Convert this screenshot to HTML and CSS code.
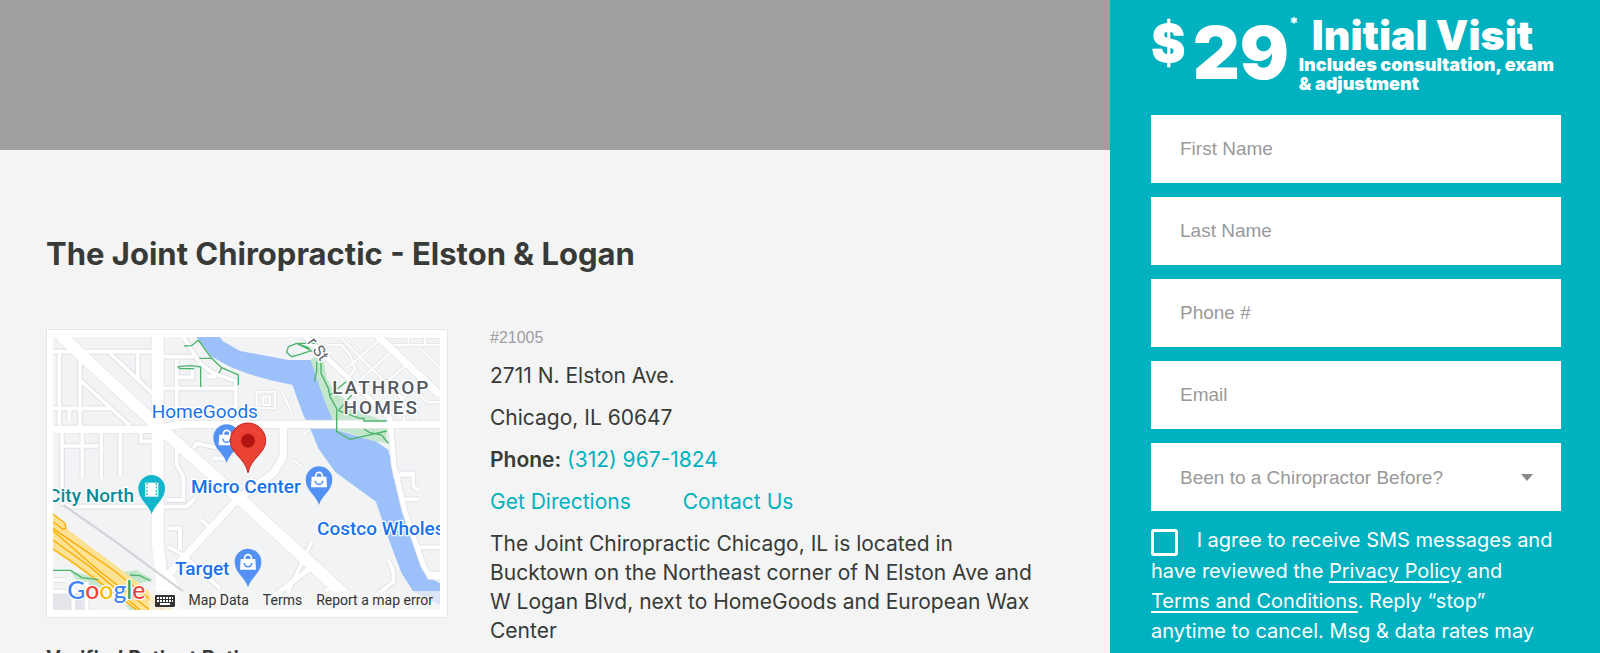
FILE: index.html
```html
<!DOCTYPE html>
<html lang="en">
<head>
  <meta charset="UTF-8">
  <meta name="viewport" content="width=device-width, initial-scale=1.0">
  <title>The Joint Chiropractic - Elston &amp; Logan</title>
  <link rel="stylesheet" href="styles.css">
</head>
<body>

<div class="page">
  <main class="main">
    <div class="hero"></div>

    <section class="clinic">
      <h1>The Joint Chiropractic - Elston &amp; Logan</h1>

      <div class="clinic-row">
        <div class="clinic-left">
          <div class="map-card">
            <div class="map">
              <svg class="map-canvas" viewBox="39 36 1161 819" preserveAspectRatio="xMidYMid slice" role="img" aria-label="Map">
                <defs>
                  <g id="minor">
                    <path d="M39 80H340M58 80V300M120 80V313M205 80L340 208M293 80V155L300 168M120 165L268 300M39 250H215M88 250V288"/>
                    <path d="M66 320V535L90 545H440L465 520M127 320V460M184 320V460M241 320V450M66 363H175M303 320V349H340"/>
                    <path d="M370 95H465M410 105V185M370 190H585M410 190V313M413 157H457V130M430 36L480 115L520 145L587 168V300"/>
                    <path d="M500 155H530M410 370V420L430 455V525H380M520 400H560M460 370L470 355L530 368"/>
                    <path d="M39 765H75M100 790V855M140 770V855M39 800H140M385 610H420V675M385 665L430 690L540 790M483 583L510 608"/>
                    <path d="M815 650L740 810M1045 705L1060 740V770L1010 810M1060 450H1125M1080 445H1120V485L1135 495M1090 523H1135M1135 667H1200M1160 745H1200"/>
                  </g>
                  <g id="thin">
                    <path d="M900 36L1100 235L1090 290M1050 36H1200M1105 36V60M1155 36V60M1060 60H1200M1140 70L1200 130M920 130L1025 40M960 165L1055 80M1010 195L1100 120M1050 255L1130 180"/>
                    <path d="M1125 190L1160 232H1200M1130 235V280M860 60H905L930 90L945 130L925 160M650 200H705V250H650ZM670 215H690V240H670ZM725 195L755 265M600 36V40M760 405L785 425M790 330L805 315"/>
                  </g>
                  <g id="bag-pin">
                    <path class="pin-blue" d="M0 0C-7 -28 -40 -43 -40 -76A40 40 0 0 1 40 -76C40 -43 7 -28 0 0Z"/>
                    <path class="pin-icon" d="M-22 -85H22L24 -53H-24Z"/>
                    <path class="bag-handle" d="M-10 -83V-88A10 10 0 0 1 10 -88V-83"/>
                    <path class="bag-smile" d="M-11 -73A11 11 0 0 0 11 -73"/>
                  </g>
                </defs>

                <rect class="land" x="39" y="36" width="1161" height="819"/>
                <path class="block" d="M39 800H130V855H39Z"/>

                <!-- river and park -->
                <path class="river" d="M470 36H540L548 48L600 78L745 105H815L835 150L880 290L890 315L1010 350L1045 375L1063 450L1105 580L1145 705L1165 755L1200 775V840L1120 800L1085 745L1045 640L1008 530L885 440L835 370L815 320L790 270L757 180L690 165L620 145L570 125L515 95Z"/>
                <path class="park" d="M812 105L825 95L852 112L860 160L880 195L960 262L1040 290V355L990 345L890 312L855 230L830 160Z"/>
                <path class="park" d="M90 738L160 755L290 735L340 765L300 775L240 745L180 790L110 765Z"/>
                <path class="park" d="M255 840L300 845L290 855H270Z"/>

                <!-- roads -->
                <use href="#minor" class="casing"/>
                <use href="#thin" class="casing-thin"/>
                <path class="major-casing" d="M60 30L350 300L600 522L920 815M353 30V660L370 760"/>
                <path class="road-casing" d="M39 313H340L420 298H1200M375 760L590 525L700 445L730 395V300M1010 30L1200 210"/>
                <path class="small-casing" d="M790 30L1050 280L1062 420L1095 560L1150 720L1170 755L1200 757M700 815L810 730M850 815L865 790"/>
                <use href="#minor" class="street"/>
                <use href="#thin" class="street-thin"/>
                <path class="major" d="M60 30L350 300L600 522L920 815"/>
                <path class="major" d="M353 30V660L370 790"/>
                <path class="road" d="M39 313H340L420 298H1200M375 760L590 525L700 445L730 395V300"/>
                <path class="road" d="M1010 30L1200 210"/>
                <path class="road-small" d="M790 30L1050 280L1062 420L1095 560L1150 720L1170 755L1200 757M700 815L810 730M850 815L865 790"/>
                <path class="road-fill" d="M365 745H395L420 790L430 855H400L345 790Z"/>

                <!-- railway and expressway -->
                <path class="rail" d="M70 540L230 652L430 800"/>
                <path class="highway" d="M39 567L75 595L78 610L245 735L400 855H290L39 675Z"/>
                <path class="highway-line" d="M39 567L75 595L78 610L68 612L39 590M39 610L220 735L370 855M39 617L180 740L330 855M39 645L150 725L300 855M39 672L110 720L290 855"/>

                <!-- trails -->
                <path class="trail" d="M475 45L455 62L433 63M475 45L515 100L545 128L595 150V180M515 100L478 100M545 128L537 145M413 125L455 122L482 126V186M413 125L420 131H462"/>
                <path class="trail" d="M830 110V140L823 168M843 112V145L865 190L870 215L890 250V320L930 343L1040 318M868 212L918 170M895 257L935 210M895 257L960 280H972V288H1040M988 322L1025 330L1045 355M988 322L972 312"/>
                <path class="trail" d="M770 55L745 65L740 82L755 95L780 88L812 78L805 68L770 55L840 90M775 55H830"/>
                <path class="trail" d="M39 736H92L125 758L175 764M270 750L300 752L332 768"/>

                <!-- labels -->
                <text class="street-label" transform="translate(800 52) rotate(55)">r St</text>
                <text class="area" x="1024" y="208">LATHROP</text>
                <text class="area" x="1024" y="266">HOMES</text>
                <text class="poi thin-label" x="335" y="278">HomeGoods</text>
                <text class="poi" x="453" y="504">Micro Center</text>
                <text class="poi" x="831" y="630">Costco Wholesale</text>
                <text class="poi" x="405" y="750">Target</text>
                <text class="poi teal" x="282" y="530">City North</text>

                <use href="#bag-pin" x="560" y="414"/>
                <use href="#bag-pin" x="837" y="540"/>
                <use href="#bag-pin" x="624" y="787"/>
                <path class="pin-teal" d="M335 568C328 540 295 525 295 490A40 40 0 0 1 375 490C375 525 342 540 335 568Z"/>
                <path class="pin-icon" d="M315 473H355V515H315Z"/>
                <path class="film" d="M321 475V514M349 475V514"/>
                <path class="pin-red" d="M624 443C616 400 571 385 571 347A53 53 0 0 1 677 347C677 385 632 400 624 443Z"/>
                <circle class="pin-dot" cx="624" cy="347" r="21"/>
                <text class="google" x="82" y="821"><tspan class="g-blue">G</tspan><tspan class="g-red">o</tspan><tspan class="g-yellow">o</tspan><tspan class="g-blue">g</tspan><tspan class="g-green">l</tspan><tspan class="g-red">e</tspan></text>
              </svg>
              <div class="map-bar">
                <button type="button" class="map-keys" aria-label="Keyboard shortcuts">
                  <svg width="20" height="12" viewBox="0 0 20 12">
                    <rect width="20" height="12" rx="1" fill="#333"/>
                    <path d="M2 3H18M2 6H18" stroke="#fff" stroke-width="2" stroke-dasharray="2 1"/>
                    <path d="M5 9H15" stroke="#fff" stroke-width="2"/>
                  </svg>
                </button>
                <button type="button">Map Data</button>
                <a href="#">Terms</a>
                <a href="#">Report a map error</a>
              </div>
            </div>
          </div>
          <h2>Verified Patient Rating</h2>
        </div>

        <div class="clinic-info">
          <p class="clinic-id">#21005</p>
          <p>2711 N. Elston Ave.</p>
          <p>Chicago, IL 60647</p>
          <p><strong>Phone:</strong> <a href="tel:3129671824">(312) 967-1824</a></p>
          <p class="clinic-links"><a href="#">Get Directions</a><a href="#">Contact Us</a></p>
          <p>The Joint Chiropractic Chicago, IL is located in Bucktown on the Northeast corner of N Elston Ave and W Logan Blvd, next to HomeGoods and European Wax Center</p>
        </div>
      </div>
    </section>
  </main>

  <aside class="sidebar">
    <div class="offer">
      <span class="offer-dollar">$</span>
      <span class="offer-price">29</span>
      <span class="offer-star">*</span>
      <div class="offer-text">
        <div class="offer-title">Initial Visit</div>
        <div class="offer-sub">Includes consultation, exam &amp; adjustment</div>
      </div>
    </div>

    <form class="lead-form">
      <input class="field" type="text" aria-label="First Name" placeholder="First Name">
      <input class="field" type="text" aria-label="Last Name" placeholder="Last Name">
      <input class="field" type="tel" aria-label="Phone #" placeholder="Phone #">
      <input class="field" type="email" aria-label="Email" placeholder="Email">
      <div class="select-wrap">
        <select class="field" aria-label="Been to a Chiropractor Before?">
          <option>Been to a Chiropractor Before?</option>
          <option>Yes</option>
          <option>No</option>
        </select>
      </div>
      <div class="agree">
        <input type="checkbox" id="agree">
        <label for="agree">I agree to receive SMS messages and have reviewed the <a href="#">Privacy Policy</a> and <a href="#">Terms and Conditions</a>. Reply “stop” anytime to cancel. Msg &amp; data rates may apply.</label>
      </div>
    </form>
  </aside>
</div>

</body>
</html>
```
FILE: styles.css
```css
* {
  box-sizing: border-box;
}

body {
  margin: 0;
  height: 100vh;
  overflow: hidden;
  background: #f4f4f4;
  color: #373a36;
  font-family: Inter, "Liberation Sans", sans-serif;
  font-size: 20px;
  line-height: 29px;
}

a {
  color: #00b2bf;
  text-decoration: none;
}

.page {
  display: flex;
  min-height: 100vh;
}

.main {
  flex: 1;
  min-width: 0;
}

.hero {
  height: 150px;
  background: #9f9f9f;
}

.clinic {
  padding: 84px 46px 0;
}

h1 {
  margin: 0 0 55px;
  font-size: 31px;
  line-height: 40px;
  font-weight: 700;
}

.clinic-row {
  display: grid;
  grid-template-columns: 402px 1fr;
  gap: 42px;
}

.map-card {
  padding: 7px 7px 7px 6px;
  background: #fff;
  border: 1px solid #e6e6e6;
}

.map {
  position: relative;
  overflow: hidden;
}

.map-canvas {
  display: block;
  width: 100%;
}

.land { fill: #f1f3f4; }
.block { fill: #e3e5ea; }
.river { fill: #9cc0f9; }
.park { fill: #c3e6cd; }
.rail { fill: none; stroke: #d3d5d8; stroke-width: 7; }
.highway { fill: #fde293; }
.highway-line { fill: none; stroke: #f9ab00; stroke-width: 4; }
.trail { fill: none; stroke: #4bb36a; stroke-width: 4; }

.casing { fill: none; stroke: #dfe1e5; stroke-width: 17; }
.casing-thin { fill: none; stroke: #e4e6e9; stroke-width: 11; }
.major-casing { fill: none; stroke: #e6e8eb; stroke-width: 40; }
.road-casing { fill: none; stroke: #e3e5e8; stroke-width: 27; }
.small-casing { fill: none; stroke: #dfe1e5; stroke-width: 20; }
.street { fill: none; stroke: #fff; stroke-width: 11; }
.street-thin { fill: none; stroke: #fff; stroke-width: 6; }
.major { fill: none; stroke: #fff; stroke-width: 35; }
.road { fill: none; stroke: #fff; stroke-width: 22; }
.road-small { fill: none; stroke: #fff; stroke-width: 15; }
.road-fill { fill: #fff; }

.map-canvas text {
  font-family: Roboto, sans-serif;
  font-size: 57px;
  paint-order: stroke;
  stroke: #fff;
  stroke-width: 8px;
  stroke-linejoin: round;
}

.map-canvas .poi {
  fill: #1a73e8;
  font-weight: 500;
}

.map-canvas .thin-label {
  font-weight: 400;
}

.map-canvas .teal {
  fill: #0b8a94;
  text-anchor: end;
}

.map-canvas .area {
  fill: #555a60;
  font-weight: 500;
  letter-spacing: 6px;
  text-anchor: middle;
}

.map-canvas .street-label {
  fill: #5f6368;
  font-size: 48px;
}

.map-canvas .google {
  font-family: Lato, sans-serif;
  font-size: 74px;
  font-weight: 500;
}

.g-blue { fill: #4285f4; }
.g-red { fill: #ea4335; }
.g-yellow { fill: #fbbc04; }
.g-green { fill: #34a853; }

.pin-blue { fill: #5491f5; }
.pin-teal { fill: #12b5cb; }
.pin-red { fill: #ea4335; stroke: #c5221f; stroke-width: 3; }
.pin-dot { fill: #b31412; }
.pin-icon { fill: #fff; }
.bag-handle { fill: none; stroke: #fff; stroke-width: 5; }
.bag-smile { fill: none; stroke: #5491f5; stroke-width: 5; }
.film { fill: none; stroke: #12b5cb; stroke-width: 4; stroke-dasharray: 5 5; }

.map-bar {
  position: absolute;
  right: 0;
  bottom: 0;
  display: flex;
  align-items: center;
  gap: 14px;
  height: 19px;
  padding: 0 7px 0 6px;
  background: rgba(245, 245, 245, 0.7);
}

.map-bar button,
.map-bar a {
  padding: 0;
  border: 0;
  background: none;
  color: #333;
  font-family: Roboto, sans-serif;
  font-size: 14px;
  line-height: 19px;
}

.map-keys svg {
  display: block;
}

h2 {
  margin: 27px 0 0;
  font-size: 20px;
  line-height: 26px;
  font-weight: 700;
}

.clinic-info {
  padding-right: 16px;
  font-size: 21px;
}

.clinic-info p {
  margin: 0 0 13px;
}

.clinic-info .clinic-id {
  margin: 0 0 14px;
  color: #9e9e9e;
  font-family: "Liberation Sans", Arial, sans-serif;
  font-size: 16px;
  line-height: 18px;
}

.clinic-info strong {
  font-weight: 600;
}

.clinic-links {
  display: flex;
  gap: 52px;
}

.sidebar {
  width: 490px;
  padding: 15px 39px 0 41px;
  background: #00b2bf;
  color: #fff;
}

.offer {
  display: flex;
  height: 100px;
  font-weight: 900;
}

.offer-dollar {
  font-size: 52px;
  line-height: 58px;
}

.offer-price {
  margin-left: 7px;
  font-size: 73px;
  line-height: 75px;
}

.offer-star {
  font-size: 16px;
  line-height: 16px;
}

.offer-text {
  flex: 1;
}

.offer-title {
  padding-left: 13px;
  font-size: 41px;
  line-height: 40px;
  white-space: nowrap;
}

.offer-sub {
  font-size: 18px;
  line-height: 19px;
}

.lead-form {
  display: flex;
  flex-direction: column;
  gap: 14px;
}

.field {
  display: block;
  width: 100%;
  height: 68px;
  padding: 0 29px;
  border: 0;
  border-radius: 0;
  background: #fff;
  color: #999;
  font-family: "Liberation Sans", Arial, sans-serif;
  font-size: 19px;
  outline: none;
  appearance: none;
}

.field::placeholder {
  color: #999;
}

.select-wrap {
  position: relative;
}

.select-wrap::after {
  content: "";
  position: absolute;
  top: 31px;
  right: 28px;
  border: 6px solid transparent;
  border-top: 7px solid #888;
  border-bottom: 0;
  pointer-events: none;
}

.agree {
  font-size: 20px;
  line-height: 30px;
}

.agree input {
  width: 27px;
  height: 27px;
  margin: 2px 13px 0 0;
  border: 3px solid #fff;
  border-radius: 3px;
  appearance: none;
  vertical-align: middle;
}

.agree a {
  color: #fff;
  text-decoration: underline;
  text-decoration-thickness: 2px;
  text-underline-offset: 3px;
}
```
